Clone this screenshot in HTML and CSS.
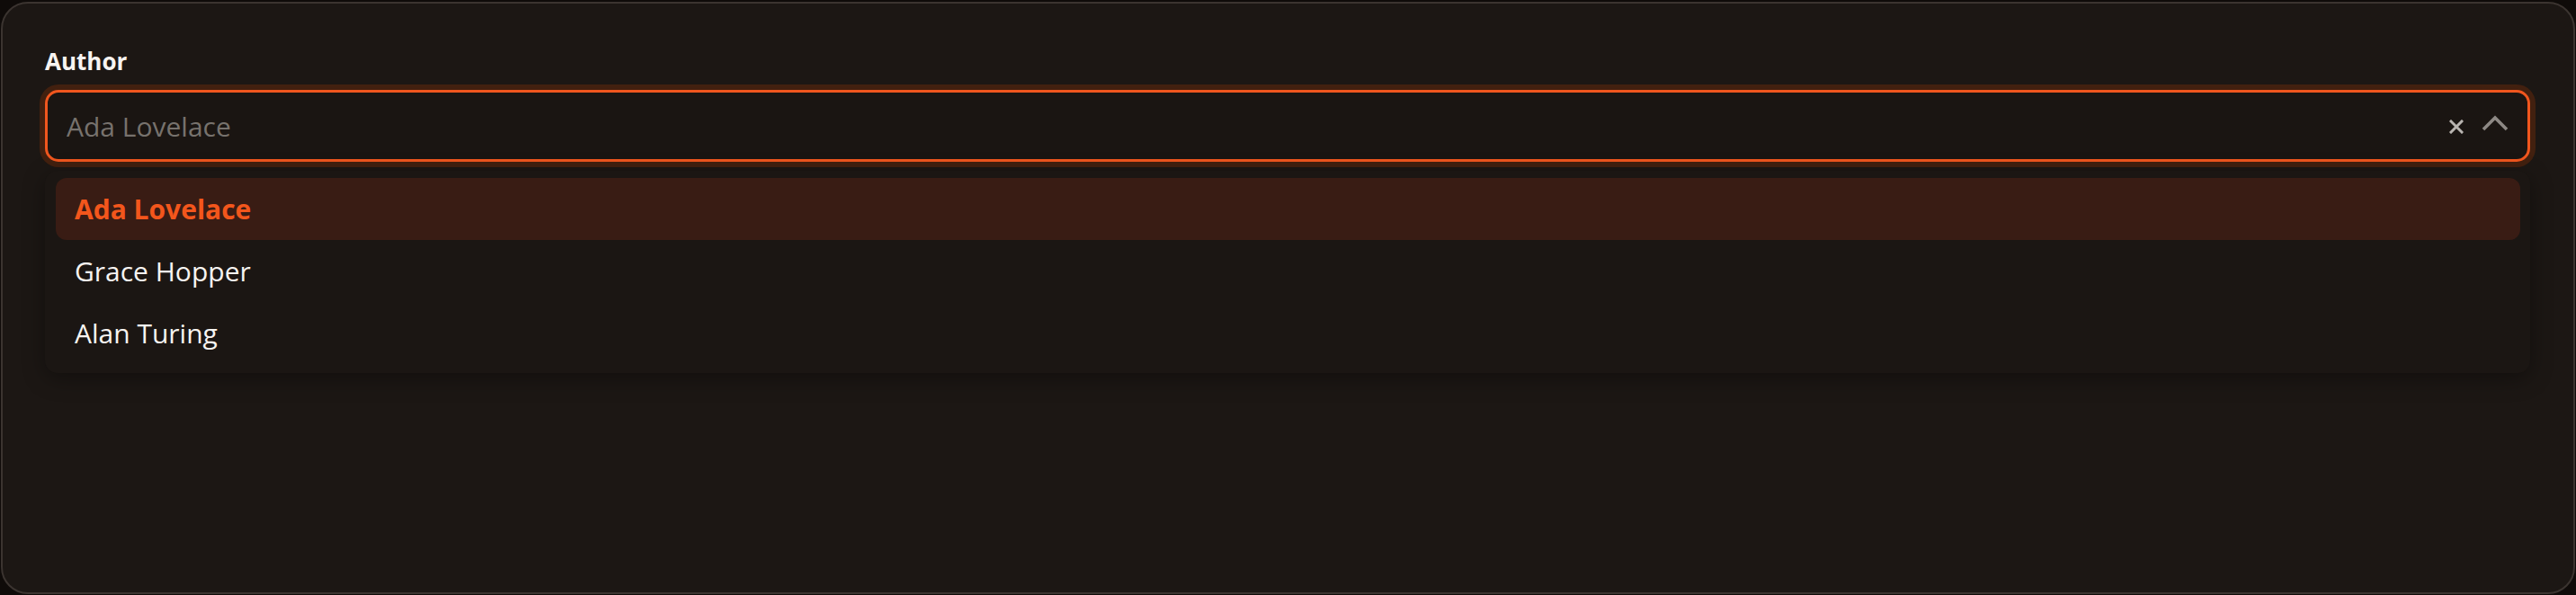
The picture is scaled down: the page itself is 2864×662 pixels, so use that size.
FILE: index.html
```html
<!DOCTYPE html>
<html lang="en">
<head>
<meta charset="utf-8">
<title>Author select</title>
<link rel="stylesheet" href="styles.css">
</head>
<body>
<div class="card">
  <label class="label" for="author">Author</label>
  <div class="field">
    <div class="control">
      <input id="author" class="input" type="text" placeholder="Ada Lovelace">
      <div class="actions">
        <span class="clear" aria-label="Clear">
          <svg width="16" height="16" viewBox="0 0 16 16"><path d="M2 2 L14 14 M14 2 L2 14" stroke="#b9b5b1" stroke-width="3" stroke-linecap="square" fill="none"/></svg>
        </span>
        <span class="chevron" aria-label="Collapse">
          <svg width="30" height="18" viewBox="0 0 30 18"><path d="M2 16 L15 3 L28 16" stroke="#8d8884" stroke-width="3.6" fill="none"/></svg>
        </span>
      </div>
    </div>
    <ul class="menu">
      <li class="option active">Ada Lovelace</li>
      <li class="option">Grace Hopper</li>
      <li class="option">Alan Turing</li>
    </ul>
  </div>
</div>
</body>
</html>
```
FILE: styles.css
```css
* { box-sizing: border-box; }
html, body { margin: 0; height: 100%; }
body {
  background: #0f0b09;
  padding: 2px 1px 1px 1px;
  font-family: "Open Sans", "Noto Sans", sans-serif;
}
.card {
  height: 100%;
  background: #1c1714;
  border: 2px solid #3b3430;
  border-radius: 30px;
  padding: 48px 48px 0 47px;
}
.label {
  display: block;
  color: #f7f4f1;
  font-size: 26px;
  font-weight: 700;
  line-height: 32px;
  margin-bottom: 16px;
}
.field { position: relative; }
.control {
  display: flex;
  align-items: center;
  height: 80px;
  border: 3px solid #f0561e;
  border-radius: 15px;
  box-shadow: 0 0 0 6px #42200f;
  background: #1a1512;
  padding: 0 21px 0 21px;
}
.input {
  flex: 1;
  background: transparent;
  border: 0;
  outline: none;
  font: inherit;
  font-size: 30px;
  color: #f7f4f1;
  padding: 0;
}
.input::placeholder { color: #77726d; }
.actions {
  display: flex;
  align-items: center;
  gap: 20px;
}
.clear { display: flex; width: 16px; height: 16px; margin-top: 2px; }
.chevron { display: flex; width: 30px; height: 18px; margin-top: -6px; }
.menu {
  list-style: none;
  margin: 10px 0 0 0;
  padding: 8px 11px 10px 12px;
  background: #1b1613;
  border-radius: 14px;
  box-shadow: 0 6px 24px rgba(0,0,0,0.35);
}
.option {
  height: 69px;
  display: flex;
  align-items: center;
  padding: 0 21px;
  font-size: 30px;
  line-height: 1;
  color: #f7f4f1;
  border-radius: 12px;
}
.option.active {
  background: #391c14;
  color: #f3561c;
  font-weight: 700;
}
```
